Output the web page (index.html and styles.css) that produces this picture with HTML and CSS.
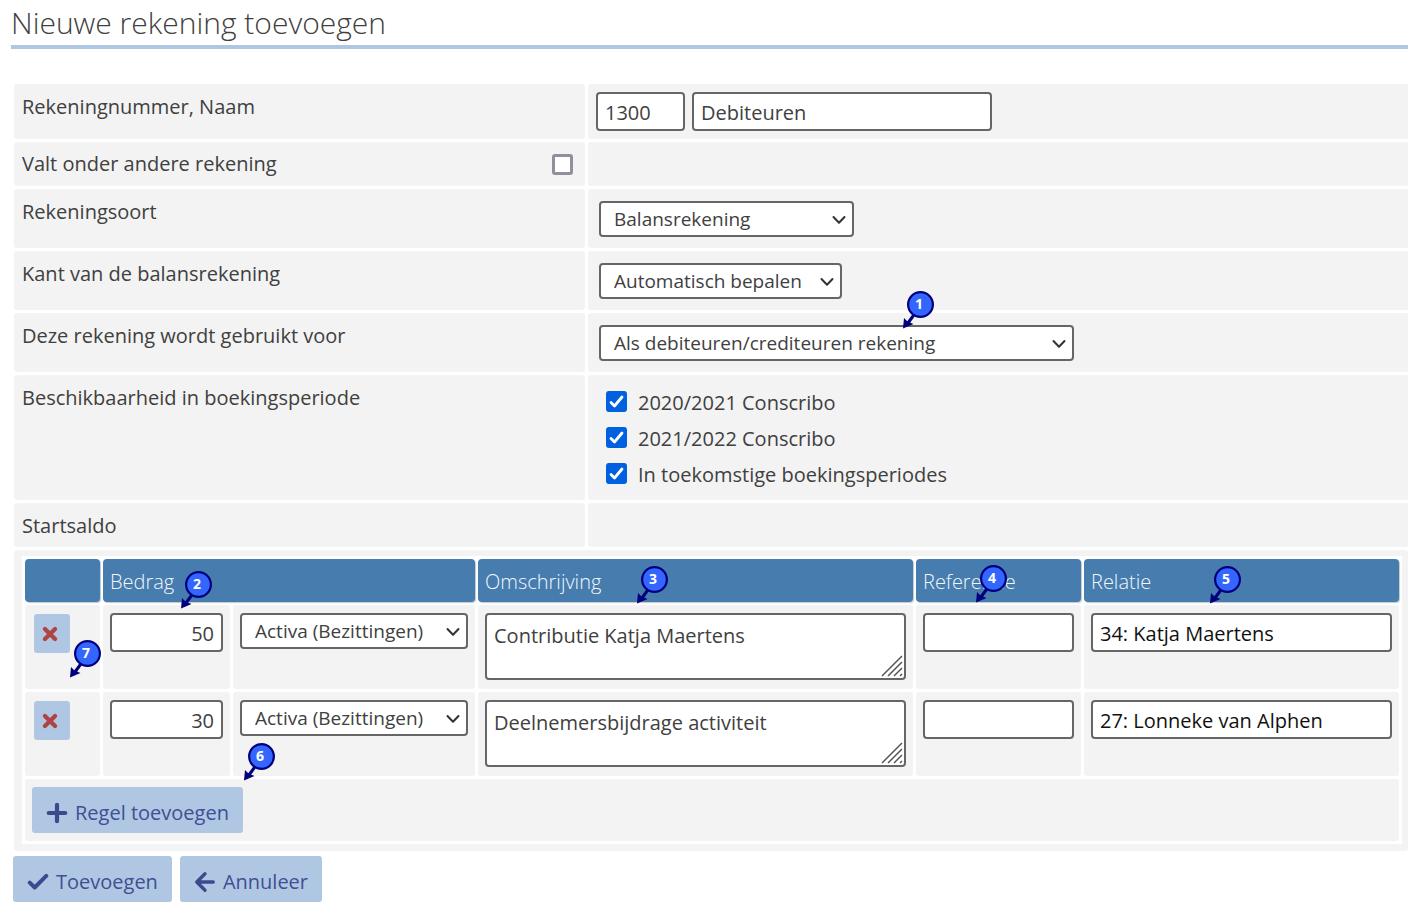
FILE: index.html
```html
<!DOCTYPE html>
<html lang="nl">
<head>
<meta charset="utf-8">
<title>Nieuwe rekening toevoegen</title>
<link rel="stylesheet" href="styles.css">
</head>
<body>
<svg class="defs" aria-hidden="true">
  <symbol id="pin" viewBox="0 0 32 38">
    <path d="M14 21 L6 32" stroke="#00007c" stroke-width="3"/>
    <path d="M1 37.500 L2 27 L5.500 30.500 L11.500 33 Z" fill="#00007c"/>
    <circle cx="18.500" cy="13.500" r="12.400" fill="#3366ff" stroke="#00007c" stroke-width="2.200"/>
  </symbol>
  <symbol id="cross" viewBox="0 0 16 16">
    <path d="M3.500 3.500 L12.500 12.500 M12.500 3.500 L3.500 12.500" stroke="#b04343" stroke-width="3.800" stroke-linecap="round" fill="none"/>
  </symbol>
  <symbol id="grip" viewBox="0 0 22 22">
    <path d="M1 21 L21 1 M7 21 L21 7 M13 21 L21 13 M19 21 L21 19" stroke="#555" stroke-width="1.500" fill="none"/>
  </symbol>
  <symbol id="chevron" viewBox="0 0 14 10">
    <path d="M1.500 2 L7 7.800 L12.500 2" stroke="#333" stroke-width="2" stroke-linecap="round" stroke-linejoin="round" fill="none"/>
  </symbol>
</svg>
<h1 class="title">Nieuwe rekening toevoegen</h1>
<form class="form">
  <div class="grid">
    <label class="cell" for="nummer">Rekeningnummer, Naam</label>
    <div class="cell fields">
      <input class="text number" id="nummer" value="1300">
      <input class="text name" aria-label="Naam" value="Debiteuren">
    </div>

    <div class="cell split">
      <label for="onder">Valt onder andere rekening</label>
      <input class="check" type="checkbox" id="onder">
    </div>
    <div class="cell"></div>

    <label class="cell" for="soort">Rekeningsoort</label>
    <div class="cell choice">
      <div class="select w-soort"><select id="soort"><option>Balansrekening</option></select><svg><use href="#chevron"/></svg></div>
    </div>

    <label class="cell" for="kant">Kant van de balansrekening</label>
    <div class="cell choice">
      <div class="select w-kant"><select id="kant"><option>Automatisch bepalen</option></select><svg><use href="#chevron"/></svg></div>
    </div>

    <label class="cell" for="gebruik">Deze rekening wordt gebruikt voor</label>
    <div class="cell choice">
      <div class="select w-gebruik"><select id="gebruik"><option>Als debiteuren/crediteuren rekening</option></select><svg><use href="#chevron"/></svg></div>
      <span class="pin pin-gebruik"><svg><use href="#pin"/></svg><b>1</b></span>
    </div>

    <div class="cell">Beschikbaarheid in boekingsperiode</div>
    <div class="cell periods">
      <label><input class="check" type="checkbox" checked>2020/2021 Conscribo</label>
      <label><input class="check" type="checkbox" checked>2021/2022 Conscribo</label>
      <label><input class="check" type="checkbox" checked>In toekomstige boekingsperiodes</label>
    </div>

    <div class="cell">Startsaldo</div>
    <div class="cell"></div>

    <div class="cell wide">
      <table class="lines">
        <colgroup><col class="c-del"><col class="c-amount"><col class="c-side"><col><col class="c-ref"><col class="c-rel"></colgroup>
        <thead>
          <tr>
            <th></th>
            <th colspan="2">Bedrag<span class="pin pin-bedrag"><svg><use href="#pin"/></svg><b>2</b></span></th>
            <th>Omschrijving<span class="pin pin-oms"><svg><use href="#pin"/></svg><b>3</b></span></th>
            <th>Referentie<span class="pin pin-ref"><svg><use href="#pin"/></svg><b>4</b></span></th>
            <th>Relatie<span class="pin pin-rel"><svg><use href="#pin"/></svg><b>5</b></span></th>
          </tr>
        </thead>
        <tbody>
          <tr>
            <td><button class="delete" type="button" aria-label="Verwijderen"><svg><use href="#cross"/></svg></button><span class="pin pin-regel"><svg><use href="#pin"/></svg><b>7</b></span></td>
            <td><input class="text amount" aria-label="Bedrag" value="50"></td>
            <td><div class="select"><select aria-label="Zijde"><option>Activa (Bezittingen)</option></select><svg><use href="#chevron"/></svg></div></td>
            <td><div class="area"><textarea aria-label="Omschrijving">Contributie Katja Maertens</textarea><svg><use href="#grip"/></svg></div></td>
            <td><input class="text" aria-label="Referentie"></td>
            <td><input class="text relation" aria-label="Relatie" value="34: Katja Maertens"></td>
          </tr>
          <tr>
            <td><button class="delete" type="button" aria-label="Verwijderen"><svg><use href="#cross"/></svg></button></td>
            <td><input class="text amount" aria-label="Bedrag" value="30"></td>
            <td><div class="select"><select aria-label="Zijde"><option>Activa (Bezittingen)</option></select><svg><use href="#chevron"/></svg></div><span class="pin pin-toevoegen"><svg><use href="#pin"/></svg><b>6</b></span></td>
            <td><div class="area"><textarea aria-label="Omschrijving">Deelnemersbijdrage activiteit</textarea><svg><use href="#grip"/></svg></div></td>
            <td><input class="text" aria-label="Referentie"></td>
            <td><input class="text relation" aria-label="Relatie" value="27: Lonneke van Alphen"></td>
          </tr>
          <tr>
            <td class="add" colspan="6">
              <button class="button" type="button"><svg viewBox="0 0 20 20"><path d="M10 2.500V17.500M2.500 10H17.500" stroke-width="3.800"/></svg>Regel toevoegen</button>
            </td>
          </tr>
        </tbody>
      </table>
    </div>
  </div>
  <div class="actions">
    <button class="button" type="submit"><svg viewBox="0 0 20 20"><path d="M2.500 10.500L7 15L17.500 4.500" stroke-width="3.600"/></svg>Toevoegen</button>
    <button class="button" type="button"><svg viewBox="0 0 20 20"><path d="M10 2.500L2.500 10L10 17.500M3 10H17.500" stroke-width="3"/></svg>Annuleer</button>
  </div>
</form>
</body>
</html>
```
FILE: styles.css
```css
* { box-sizing: border-box; }
body {
  margin: 0;
  background: #fff;
  color: #404040;
  font: 20px/28px "Segoe UI", "Open Sans", "Noto Sans", sans-serif;
}
.defs { position: absolute; width: 0; height: 0; }
input, select, textarea, button { font: inherit; color: inherit; margin: 0; }

.title {
  margin: 0 0 35px 11px;
  height: 49px;
  border-bottom: 4px solid #b0c7e4;
  font-size: 30px;
  line-height: 46px;
  font-weight: 300;
}
.grid {
  display: grid;
  grid-template-columns: 571fr 820fr;
  gap: 3px;
  margin-left: 14px;
}
.cell {
  position: relative;
  padding: 9px 8px 7px;
  min-height: 44px;
  background: #f3f3f3;
  border-radius: 3px 0 0 3px;
}
.cell:nth-child(odd) { border-radius: 3px; }
.fields { display: flex; gap: 7px; padding: 8px; }
.text {
  display: block;
  width: 100%;
  height: 39px;
  padding: 2px 7px 0;
  border: 2px solid #666;
  border-radius: 4px;
  background: #fff;
}
.number { width: 89px; }
.name { width: 300px; }
.amount { text-align: right; }
.relation { color: #111; }

.split { display: flex; justify-content: space-between; align-items: center; padding: 8px 12px 8px 8px; }
.check {
  appearance: none;
  flex: none;
  width: 21px;
  height: 21px;
  border: 3px solid #8f8f9d;
  border-radius: 3px;
  background: #fff;
}
.check:checked {
  border: 0;
  background: #0060df url("data:image/svg+xml,%3Csvg xmlns='http://www.w3.org/2000/svg' viewBox='0 0 21 21'%3E%3Cpath d='M5 11.500L8.500 15L16 6' fill='none' stroke='white' stroke-width='2.800' stroke-linecap='round' stroke-linejoin='round'/%3E%3C/svg%3E");
}

.choice { padding: 12px 11px 11px; }
.select { position: relative; height: 36px; }
.select select {
  appearance: none;
  display: block;
  width: 100%;
  height: 100%;
  padding: 0 28px 0 13px;
  border: 2px solid #666;
  border-radius: 4px;
  background: #fff;
  font-size: 19px;
}
.select svg {
  position: absolute;
  right: 8px;
  top: 14px;
  width: 14px;
  height: 10px;
  pointer-events: none;
}
.w-soort { width: 255px; }
.w-kant { width: 243px; }
.w-gebruik { width: 475px; }

.periods {
  display: flex;
  flex-direction: column;
  gap: 8px;
  padding: 14px 18px 11px;
}
.periods label { display: flex; align-items: center; gap: 11px; }
.periods .check { margin-bottom: 3px; }

.wide { grid-column: 1 / -1; padding: 6px 6px 7px 8px; }
.lines {
  width: 100%;
  table-layout: fixed;
  border-collapse: separate;
  border-spacing: 3px;
  background: #fff;
}
.c-del { width: 75px; }
.c-amount { width: 127px; }
.c-side { width: 242px; }
.c-ref { width: 165px; }
.c-rel { width: 315px; }
th {
  position: relative;
  height: 43px;
  padding: 3px 7px 0;
  border-radius: 4px;
  background: #477cae;
  box-shadow: 1px 1px 1px #c0c8d0;
  color: #f3f7fb;
  font-weight: 300;
  text-align: left;
}
td {
  position: relative;
  padding: 8px 7px 9px;
  border-radius: 3px;
  background: #f3f3f3;
  vertical-align: top;
}
.delete {
  display: flex;
  align-items: center;
  justify-content: center;
  width: 36px;
  height: 39px;
  margin: 1px 2px;
  padding: 0 4px 0 0;
  border: 0;
  border-radius: 3px;
  background: #b0c7e4;
}
.delete svg { width: 18px; height: 18px; }
.area { position: relative; height: 67px; }
.area textarea {
  display: block;
  width: 100%;
  height: 100%;
  padding: 7px;
  border: 2px solid #666;
  border-radius: 4px;
  background: #fff;
  resize: none;
  overflow: hidden;
}
.area svg { position: absolute; right: 3px; bottom: 3px; width: 22px; height: 22px; }
.add { padding: 8px 7px; }

.button {
  display: flex;
  align-items: center;
  gap: 7px;
  height: 46px;
  padding: 5px 14px 0;
  border: 0;
  border-radius: 3px;
  background: #b0c7e4;
  color: #3f4f91;
}
.button svg {
  width: 22px;
  height: 22px;
  fill: none;
  stroke: #3a4a8c;
  stroke-linecap: round;
  stroke-linejoin: round;
}
.actions { display: flex; gap: 8px; margin: 5px 0 0 13px; }

.pin { position: absolute; z-index: 2; width: 32px; height: 38px; }
.pin svg { display: block; width: 32px; height: 38px; }
.pin b {
  position: absolute;
  left: 7px;
  top: 2px;
  width: 20px;
  color: #fff;
  font: 700 14px/21px "Noto Sans", sans-serif;
  text-align: center;
}
.pin-gebruik { left: 314px; top: -22px; }
.pin-bedrag { left: 77px; top: 12px; }
.pin-oms { left: 158px; top: 7px; }
.pin-ref { left: 59px; top: 6px; }
.pin-rel { left: 125px; top: 7px; }
.pin-toevoegen { left: 10px; top: 51px; }
.pin-regel { left: 44px; top: 35px; }
```
